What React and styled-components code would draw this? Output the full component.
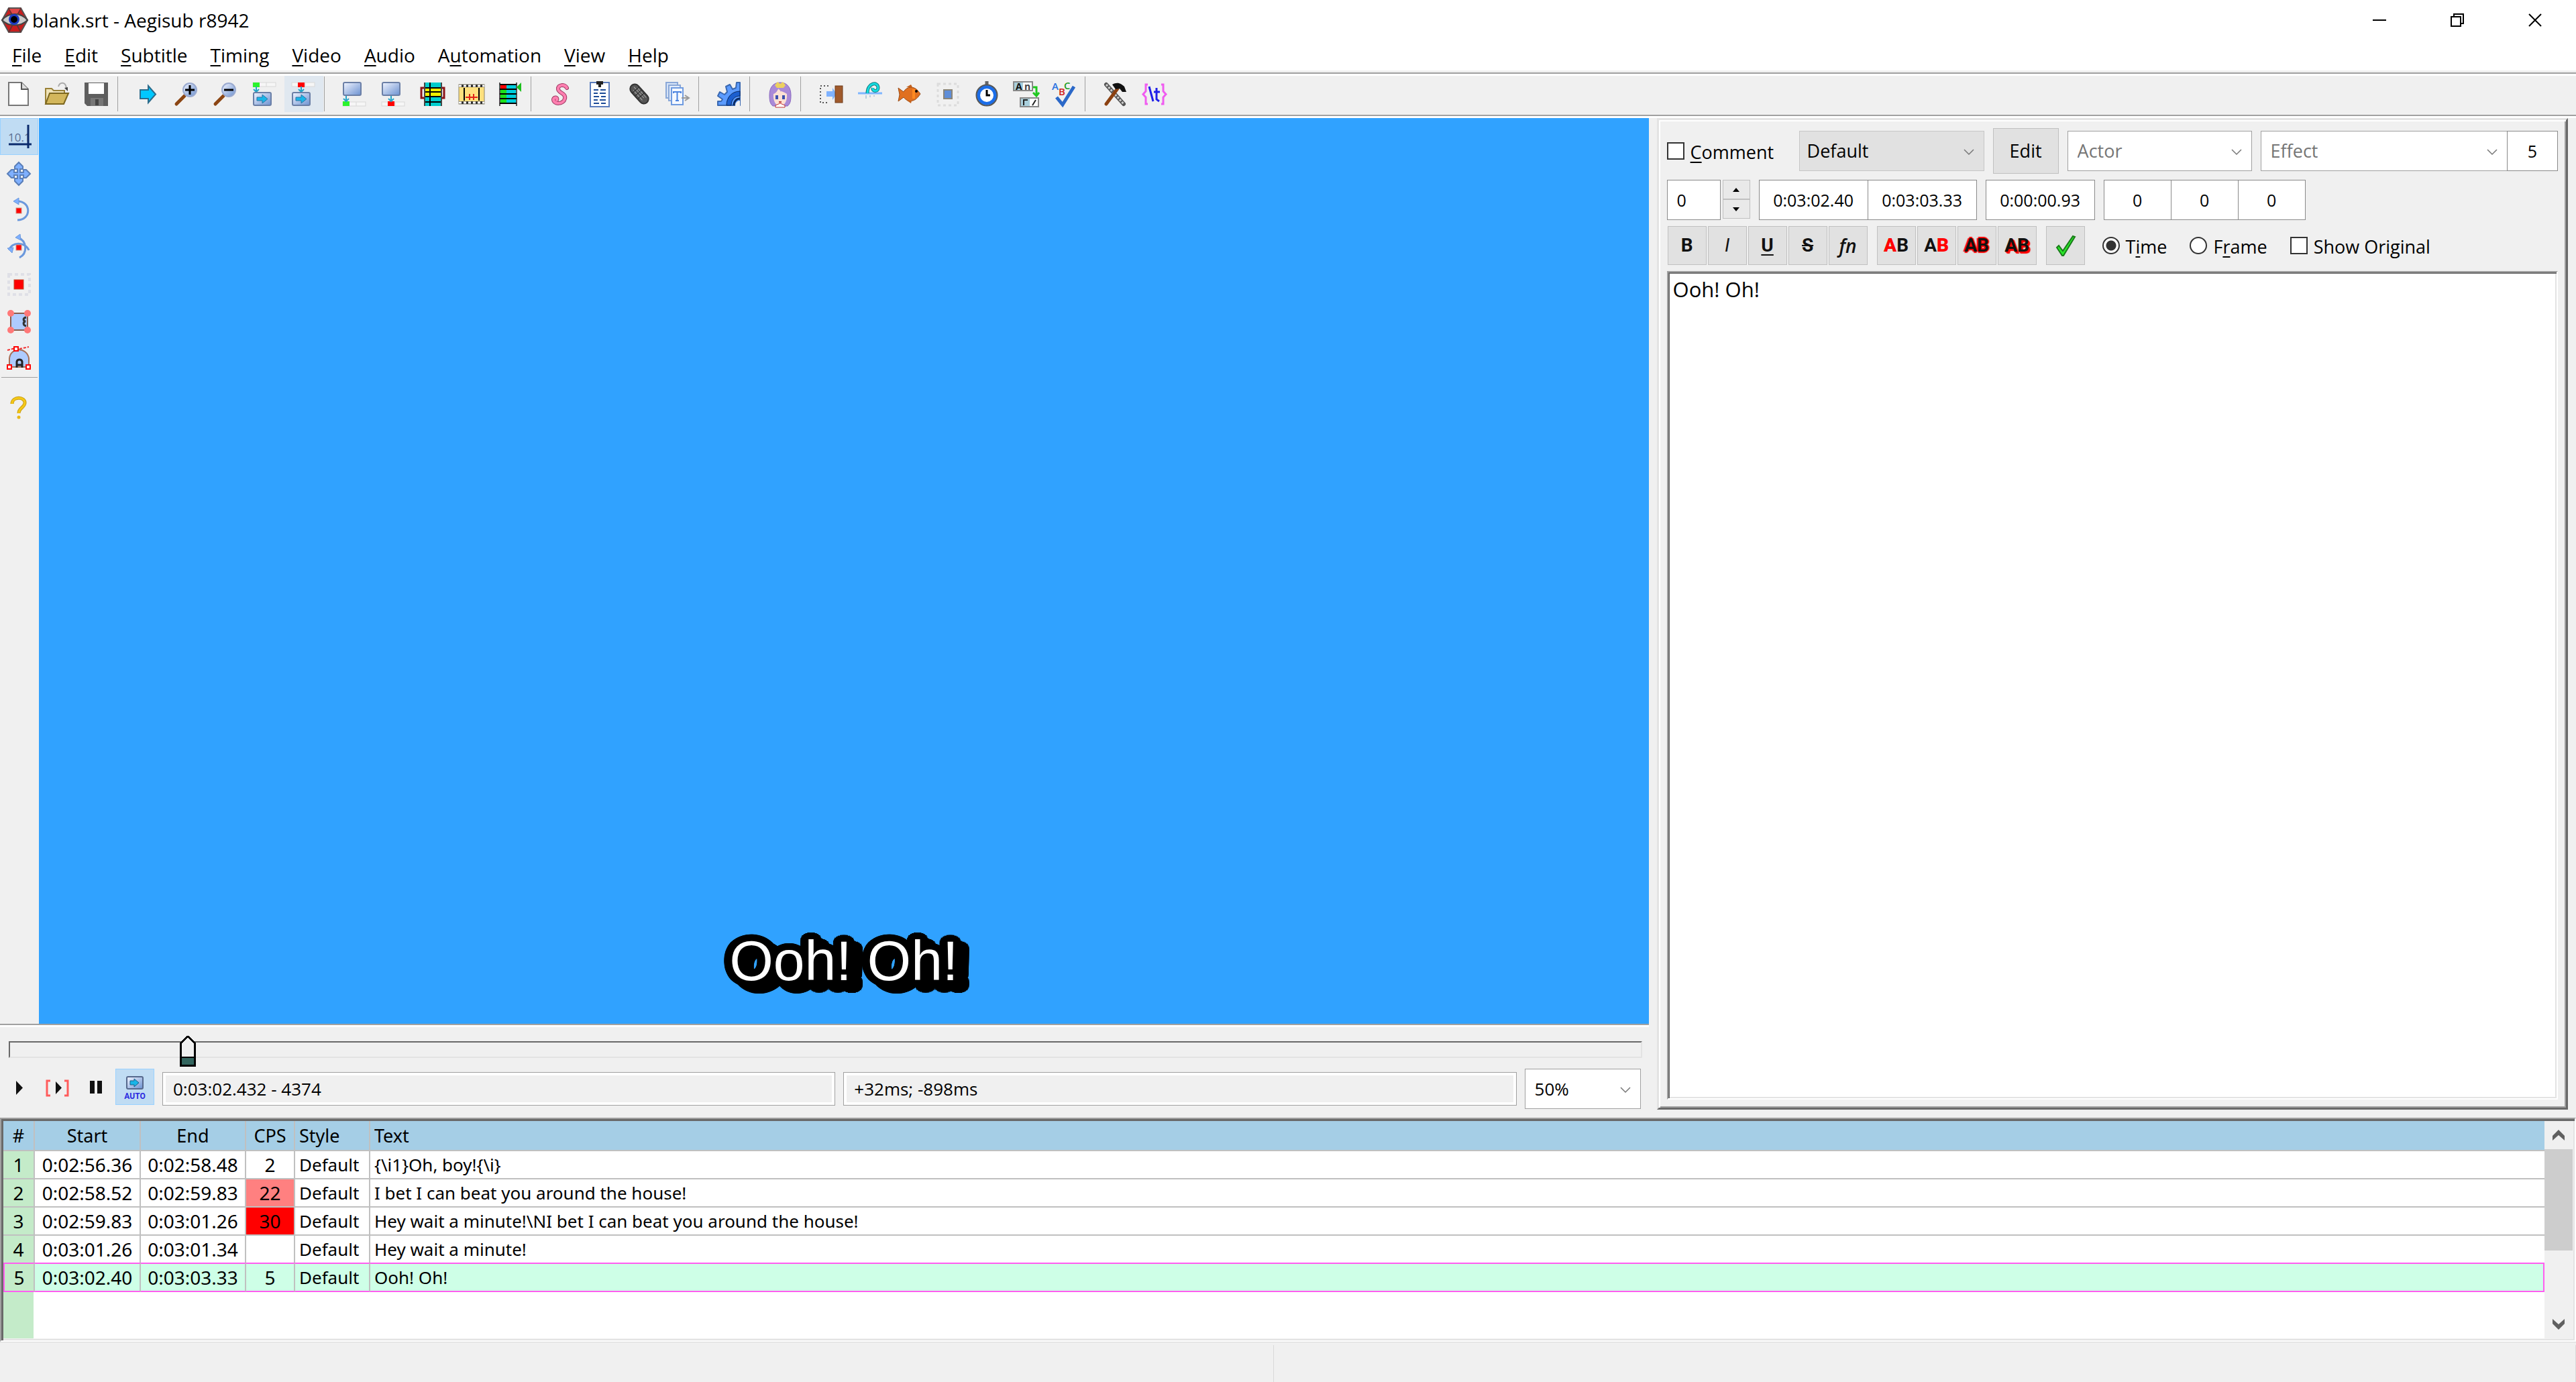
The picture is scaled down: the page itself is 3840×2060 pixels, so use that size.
import { useState } from "react";
import styled, { createGlobalStyle, css } from "styled-components";

const face = "#f0f0f0";
const shadow = "#a0a0a0";
const darkShadow = "#696969";
const light = "#e3e3e3";
const uiFont = `"Open Sans", "Noto Sans", sans-serif`;
const gridFont = `"Noto Sans", "Open Sans", sans-serif`;

const GlobalStyle = createGlobalStyle`
  * {
    box-sizing: border-box;
  }
  body {
    margin: 0;
    background: ${face};
    color: #000;
    font: 27px/36px ${uiFont};
  }
  button, input, select, textarea {
    margin: 0;
    font: inherit;
    color: inherit;
    border-radius: 0;
  }
  u {
    text-decoration-thickness: 2px;
    text-underline-offset: 4px;
  }
`;

const Window = styled.div`
  display: flex;
  flex-direction: column;
  min-height: 100vh;
`;

const TitleBar = styled.header`
  display: flex;
  align-items: center;
  height: 58px;
  padding: 2px 3px 0 2px;
  background: #fff;
`;

const Title = styled.h1`
  flex: 1;
  margin: 0 0 0 6px;
  font-size: 28px;
  font-weight: 400;
`;

const CaptionButton = styled.button`
  display: grid;
  place-items: center;
  width: 116px;
  height: 56px;
  padding: 0;
  border: 0;
  background: none;
`;

const MenuBar = styled.nav`
  display: flex;
  align-items: center;
  gap: 34px;
  height: 47px;
  padding-left: 18px;
  background: #fff;
  font-size: 28px;
`;

const MenuButton = styled.button`
  padding: 0;
  border: 0;
  background: none;
`;

const ToolBar = styled.div`
  display: flex;
  margin-top: 3px;
  padding: 3px 0 4px;
  border-top: 2px solid ${shadow};
  box-shadow: inset 0 3px #fff;
`;

const ToolButton = styled.button`
  display: grid;
  place-items: center;
  flex: none;
  width: ${(p) => (p.$narrow ? 57 : 58)}px;
  height: ${(p) => (p.$narrow ? 55 : 54)}px;
  padding: 0;
  border: 1px solid transparent;
  background: none;
  ${(p) =>
    p.$hot &&
    css`
      background: #e0e8f0;
    `}
  ${(p) =>
    p.$pressed &&
    css`
      background: #c0dcf3;
      border-color: #99d1ff;
    `}
`;

const ToolSeparator = styled.div`
  flex: none;
  width: 18px;
  height: 52px;
  margin-top: 1px;
  background: linear-gradient(90deg, transparent 1px, ${shadow} 1px, ${shadow} 2px, transparent 2px);
`;

const SideSeparator = styled.div`
  height: 19px;
  margin: 0 2px;
  background: linear-gradient(transparent 1px, ${shadow} 1px, ${shadow} 2px, transparent 2px);
`;

const Main = styled.main`
  display: flex;
  flex: 1;
  border-top: 2px solid ${shadow};
  box-shadow: inset 0 3px #fff;
  padding-top: 3px;
`;

const VideoPane = styled.section`
  display: flex;
  flex-direction: column;
  flex: 0 0 64%;
`;

const VideoArea = styled.div`
  display: flex;
  flex: 1;
`;

const SideBar = styled.div`
  display: flex;
  flex-direction: column;
  width: 58px;
`;

const VideoDisplay = styled.div`
  display: flex;
  flex: 1;
  align-items: flex-end;
  justify-content: center;
  padding-bottom: 46px;
  background: #30a2ff;
`;

// Elliptical border plus the same shape once more as a drop shadow
const subtitleOutline = () => {
  const parts = [];
  [0, 1].forEach((step) => {
    [0.5, 1].forEach((ring) => {
      for (let i = 0; i < 32; i++) {
        const a = (i / 32) * Math.PI * 2;
        const x = Math.round(Math.cos(a) * 12 * ring + step * 12);
        const y = Math.round(Math.sin(a) * 10 * ring + step * 9);
        parts.push(`${x}px ${y}px 0 #000`);
      }
    });
  });
  return parts.join(", ");
};

const SubtitleText = styled.p`
  margin: 0;
  color: #fff;
  font: 84px/96px "Liberation Sans", Arial, sans-serif;
  text-shadow: ${subtitleOutline()};
`;

const SeekBar = styled.div`
  padding: 12px 10px 5px 13px;
  border-top: 2px solid ${shadow};
  box-shadow: inset 0 3px #fff;
`;

const SeekSlider = styled.input`
  display: block;
  width: 100%;
  height: 48px;
  appearance: none;
  background: none;

  &::-webkit-slider-runnable-track {
    height: 25px;
    border: 2px solid;
    border-color: ${darkShadow} ${light} ${light} ${darkShadow};
  }

  &::-webkit-slider-thumb {
    appearance: none;
    width: 24px;
    height: 46px;
    margin-top: -10px;
    background:
      linear-gradient(135deg, transparent calc(50% - 1px), #000 calc(50% - 1px), #000 calc(50% + 2px), ${face} calc(50% + 2px)) 0 0 / 12px 12px no-repeat,
      linear-gradient(225deg, transparent calc(50% - 1px), #000 calc(50% - 1px), #000 calc(50% + 2px), ${face} calc(50% + 2px)) 12px 0 / 12px 12px no-repeat,
      linear-gradient(90deg, #000 3px, transparent 3px, transparent 21px, #000 21px) 0 12px / 24px 34px no-repeat,
      linear-gradient(${face} 19px, #000 19px, #000 21px, #33665f 21px, #33665f 31px, #000 31px) 0 12px / 24px 34px no-repeat;
  }
`;

const VideoControls = styled.div`
  display: flex;
  align-items: center;
  padding: 0 12px 13px 0;
  font-size: 26px;
`;

const PlayButtons = styled.div`
  display: flex;
  align-self: flex-start;
  margin-right: 12px;
`;

const ReadOnlyBox = styled.input`
  flex: 1;
  min-width: 0;
  height: 50px;
  margin-right: 12px;
  padding: 0 15px;
  border: 1px solid ${shadow};
  background: ${face};
  box-shadow: inset 0 0 0 4px #fff;
`;

const SelectBox = styled.div`
  display: grid;
  align-items: center;
  flex: ${(p) => (p.$width ? "none" : 1)};
  width: ${(p) => (p.$width ? `${p.$width}px` : "auto")};

  select,
  svg {
    grid-area: 1 / 1;
  }

  select {
    width: 100%;
    height: 60px;
    padding: 0 ${(p) => (p.$button ? 11 : 14)}px;
    appearance: none;
    border: 1px solid ${(p) => (p.$button ? "#c6c6c6" : shadow)};
    background: ${(p) => (p.$button ? "#e1e1e1" : "#fff")};
    color: ${(p) => (p.$hint ? "#767676" : "#000")};
  }

  svg {
    justify-self: end;
    margin: 4px 16px 0 0;
    pointer-events: none;
  }
`;

const EditPanel = styled.section`
  display: flex;
  flex: 1;
  flex-direction: column;
  gap: 9px;
  min-width: 0;
  margin: 0 12px 12px;
  padding: 12px;
  border: 3px solid;
  border-color: ${light} ${darkShadow} ${darkShadow} ${light};
  box-shadow: inset 2px 2px #fff, inset -2px -2px ${shadow};
`;

const EditRow = styled.div`
  display: flex;
  align-items: center;
  gap: 13px;
`;

const FormatRow = styled(EditRow)`
  gap: 14px;
  padding-left: 1px;
`;

const Joined = styled.div`
  display: flex;
  flex: ${(p) => (p.$grow ? 1 : "none")};
  gap: ${(p) => p.$gap || 0}px;

  & > input + input,
  & > div + input {
    margin-left: -1px;
  }
`;

const CheckLabel = styled.label`
  display: flex;
  align-items: center;
  gap: 9px;
  min-width: ${(p) => p.$width || 0}px;

  span {
    padding-top: 4px;
  }

  input {
    width: 26px;
    height: 26px;
    flex: none;
    appearance: none;
    border: 2px solid #333;
    background: #fff;
  }

  input[type="radio"] {
    border-radius: 50%;
  }

  input[type="radio"]:checked {
    background: radial-gradient(circle, #333 7px, #fff 8px);
  }

  input[type="checkbox"]:checked {
    background: radial-gradient(#333 50%, #fff 50%);
  }
`;

const PushButton = styled.button`
  display: grid;
  place-items: center;
  width: 98px;
  height: 68px;
  padding: 0;
  border: 1px solid #c0c0c0;
  background: #e1e1e1;
`;

const Field = styled.input`
  width: ${(p) => p.$width}px;
  height: 60px;
  padding: 0 14px;
  border: 1px solid #8a8a8a;
  background: #fff;
  font-size: 25px;
  text-align: ${(p) => (p.$left ? "left" : "center")};
`;

const TimeField = styled(Field)`
  padding: 0;
`;

const Spinner = styled.div`
  display: flex;
  flex-direction: column;
  width: 41px;
  height: 58px;

  button {
    display: grid;
    place-items: center;
    flex: 1;
    padding: 0;
    border: 1px solid #c0c0c0;
    background: #e9e9e9;
  }
`;

const FormatButton = styled(PushButton)`
  width: 58px;
  height: 58px;
  font: 700 28px/32px Roboto, "Open Sans", sans-serif;
  color: #111;

  i {
    font-weight: 400;
  }
  b {
    color: red;
  }
`;

const FontButton = styled(FormatButton)`
  font: italic 600 28px/32px "Open Sans", sans-serif;
`;

const OutlineGlyphs = styled.span`
  text-shadow: ${(p) =>
    p.$drop
      ? "2px 2px 1px red, 3px 3px 1px red, 1px 1px 0 red"
      : "2px 0 1px red, -2px 0 1px red, 0 2px 1px red, 0 -2px 1px red"};
`;

const Choices = styled.div`
  display: flex;
  gap: 34px;
  margin-left: 12px;
`;

const LineEditor = styled.textarea`
  display: block;
  flex: 1;
  width: 100%;
  padding: 5px 7px;
  resize: none;
  outline: 0;
  border: 2px solid;
  border-color: ${shadow} #fff #fff ${shadow};
  box-shadow: inset 2px 2px ${darkShadow}, inset -2px -2px ${light};
  background: #fff;
  font-size: 31px;
  line-height: 40px;
`;

const GridFrame = styled.section`
  display: flex;
  height: 334px;
  padding: 3px;
  border: 2px solid;
  border-color: ${shadow} #fff #fff ${shadow};
  box-shadow: inset 3px 3px ${darkShadow}, inset -2px -2px ${light};
`;

const GridScroll = styled.div`
  flex: 1;
  overflow: hidden;
  background: linear-gradient(90deg, #c4ebc9 45px, #fff 45px);
`;

const SubsTable = styled.table`
  width: 100%;
  border-collapse: separate;
  border-spacing: 0;
  table-layout: fixed;
  font: 28px/36px ${gridFont};
`;

const Cell = styled.td`
  height: 42px;
  padding: 0 ${(p) => (p.$left ? 6 : 0)}px;
  border-top: 2px solid #c0c0c0;
  border-right: 2px solid #c0c0c0;
  background: ${(p) => p.$fill || "#fff"};
  font-size: ${(p) => (p.$left ? 26 : 28)}px;
  text-align: ${(p) => (p.$left ? "left" : "center")};
  white-space: nowrap;

  &:last-child {
    border-right: 0;
  }
`;

const HeadCell = styled(Cell).attrs({ as: "th", scope: "col" })`
  height: 43px;
  border-top: 0;
  background: #a5cee6;
  font-size: 27px;
  font-weight: 400;
`;

const Row = styled.tr`
  ${(p) =>
    p.$active &&
    css`
      ${Cell} {
        height: 44px;
        border-top-color: #ff5ef0;
        border-bottom: 2px solid #ff5ef0;
      }
      ${Cell}:first-child {
        border-left: 2px solid #ff5ef0;
      }
      ${Cell}:last-child {
        border-right: 2px solid #ff5ef0;
      }
    `}
`;

const ScrollBar = styled.div`
  display: flex;
  flex-direction: column;
  width: 42px;
  background: ${face};

  button {
    display: grid;
    place-items: center;
    height: 42px;
    padding: 0;
    border: 0;
    background: none;
  }
`;

const ScrollTrack = styled.div`
  flex: 1;
`;

const ScrollThumb = styled.div`
  height: 63%;
  background: #cdcdcd;
`;

const StatusBar = styled.footer`
  display: flex;
  height: 60px;
  padding: 4px 0 0;
  border-top: 1px solid #d9d9d9;
`;

const StatusField = styled.div`
  flex: ${(p) => p.$grow} 1 0;
  border-right: 1px solid #d9d9d9;
`;

const Icon = ({ children, width = 36, height = 36, ...rest }) => (
  <svg
    width={width}
    height={height}
    viewBox={`0 0 ${width} ${height}`}
    fill="none"
    overflow="visible"
    aria-hidden="true"
    {...rest}
  >
    {children}
  </svg>
);

const Chevron = () => (
  <Icon width={14} height={8}>
    <path d="M0 0l7 7 7-7" stroke="#777" strokeWidth="1.5" />
  </Icon>
);

const Monitor = ({ y, arrow }) => (
  <g>
    <rect x="1" y={y} width="26" height="19" rx="2" fill="url(#screen)" stroke="#6b7fa6" strokeWidth="2" />
    {arrow && (
      <path d={`M6 ${y + 7}h8v-4l8 6.500-8 6.500v-4H6z`} fill="#19b5e8" stroke="#2c74a0" />
    )}
  </g>
);

const Lens = ({ plus }) => (
  <g>
    <path d="M2 33L14 21" stroke="#8b4513" strokeWidth="5" strokeLinecap="round" />
    <circle cx="22" cy="12" r="10" fill="url(#screen)" stroke="#9aaad0" strokeWidth="2" />
    <path d={plus ? "M15 12h14M22 5v14" : "M15 12h14"} stroke="#000" strokeWidth="3" />
  </g>
);

const JumpIcon = ({ color, x, below }) => (
  <g>
    <rect x="0" y={below ? 30 : 1} width="34" height="6" fill="#f6f6f6" stroke="#d8d8d8" />
    <path d={below ? "M20 30v6" : "M20 1v6"} stroke="#d8d8d8" />
    <rect x={x} y={below ? 29 : 1} width="10" height="7" fill={color} />
    <path
      d={below ? `M${x + 5} 21v7m-4-3l4 4 4-4` : `M${x + 5} 7v7m-4-3l4 4 4-4`}
      stroke="#26a5c8"
      strokeWidth="2"
    />
    <Monitor y={below ? 1 : 16} arrow={!below} />
  </g>
);

const icons = {
  newFile: (
    <g>
      <path d="M2 1h19l10 10v24H2z" fill="#fff" stroke="#777" strokeWidth="2" />
      <path d="M21 1v10h10" fill="#ddd" stroke="#555" strokeWidth="2" />
    </g>
  ),
  open: (
    <g>
      <path d="M-1 32V10h9l3 3h16v7" fill="#efe3b8" stroke="#9a8238" strokeWidth="2" />
      <path d="M-1 33l6-16h28l-7 16z" fill="#d3b75c" stroke="#7c671f" strokeWidth="2" />
      <path d="M18 7c2-7 11-8 12 3" stroke="#aaa" strokeWidth="2" />
      <path d="M27 9l5 5V8z" fill="#444" />
    </g>
  ),
  save: (
    <g>
      <path d="M-1 1h35v35H3l-4-4z" fill="#5e5e5e" />
      <rect x="5" y="2" width="23" height="16" fill="#fff" />
      <rect x="8" y="24" width="19" height="12" fill="#777" />
      <rect x="15" y="26" width="5" height="9" fill="#444" />
    </g>
  ),
  arrow: <path d="M6 12h12V6l11 12.500L18 31v-6H6z" fill="#00c8ff" stroke="#2a6c8c" strokeWidth="2" />,
  zoomIn: <Lens plus />,
  zoomOut: <Lens />,
  jumpStart: <JumpIcon color="#2bf32b" x={0} />,
  jumpEnd: <JumpIcon color="#f00" x={9} />,
  startToVideo: <JumpIcon color="#2bf32b" x={0} below />,
  endToVideo: <JumpIcon color="#f00" x={9} below />,
  snapScene: (
    <g>
      <rect x="1" y="9" width="34" height="15" stroke="#8c1418" strokeWidth="3" />
      <path d="M6 1h25v35H6z" fill="#0cc" />
      <path d="M6 9h25v14H6z" fill="#ee0" />
      <path d="M6 9h25M6 15h25M6 22h25M6 30h25M14 1v35" stroke="#000" strokeWidth="2" />
      <path d="M6 1v35M31 1v35" stroke="#444" strokeWidth="2" />
    </g>
  ),
  film: (
    <g>
      <rect x="-1" y="4" width="38" height="29" fill="#ffe07e" stroke="#8a8468" strokeWidth="1" />
      <path d="M-1 6h38M-1 31h38" stroke="#333" strokeWidth="4" />
      <path d="M-1 6h38M-1 31h38" stroke="#fff" strokeWidth="3" strokeDasharray="4 3" />
      <path d="M7 9v19M29 9v19" stroke="#000" strokeWidth="2" />
      <path d="M9 23h18M15 18v9M21 18v9" stroke="#e02418" strokeWidth="2" />
    </g>
  ),
  shiftToFrame: (
    <g>
      <path d="M2 1v35M27 1v35" stroke="#555" strokeWidth="2" />
      <path d="M3 4h9v8H3z" fill="#f00" />
      <path d="M3 12h9v21H3z" fill="#1ce01c" />
      <path d="M12 4h14v29H12z" fill="#0cd" />
      <path d="M2 4h25M2 11h25M2 18h25M2 25h25M2 32h25" stroke="#000" strokeWidth="2" />
      <path d="M27 8l7-7v14z" fill="#1cc01c" />
    </g>
  ),
  styles: (
    <g strokeLinecap="round">
      <path d="M26 9c-3-6-14-5-13 2 1 6 12 6 10 14-2 9-17 9-17 1 1-4 7-3 5 1" stroke="#9c3a62" strokeWidth="6" />
      <path d="M26 9c-3-6-14-5-13 2 1 6 12 6 10 14-2 9-17 9-17 1 1-4 7-3 5 1" stroke="#ff7fb0" strokeWidth="4" />
    </g>
  ),
  properties: (
    <g>
      <rect x="3" y="1" width="28" height="36" fill="#fff" stroke="#5b7dbd" strokeWidth="2" />
      <path d="M12-1h10v5h-3v4h-4V4h-3z" fill="#222" />
      <path
        d="M8 12h7M18 12h8M8 17h6M17 17h9M8 22h8M19 22h7M8 27h6M17 27h9M8 32h8M19 32h7"
        stroke="#1b4a96"
        strokeWidth="2"
      />
    </g>
  ),
  attachments: (
    <g transform="rotate(-42 18 18)">
      <rect x="11" y="1" width="14" height="34" rx="7" fill="#555" stroke="#333" strokeWidth="2" />
      <path d="M15 8v20M19 5v22M22 9v20" stroke="#aaa" strokeWidth="1" />
      <path d="M12 10h12M12 16h12M12 22h12" stroke="#222" />
    </g>
  ),
  fonts: (
    <g>
      <rect x="0" y="1" width="17" height="23" fill="#d6e3f6" stroke="#8aa8d8" strokeWidth="2" />
      <rect x="4" y="5" width="17" height="23" fill="#e4edfa" stroke="#8aa8d8" strokeWidth="2" />
      <rect x="8" y="9" width="17" height="25" fill="#f4f8ff" stroke="#6f9be0" strokeWidth="2" />
      <path d="M11 17v-2h11v2M16.500 15v13M14 28h5" stroke="#4c84e0" strokeWidth="2" />
      <path d="M23 24h11M28 20l6 4-6 4" stroke="#999" strokeWidth="2" />
    </g>
  ),
  automation: (
    <g strokeLinejoin="round">
      <path
        d="M34 1h-5l-1 8-5 2-4-7-6 3 2 8-4 4-7-4-3 6 7 5-2 3H1v6h33z"
        fill="#5b9bff"
        stroke="#3a68b0"
        strokeWidth="2"
      />
      <path d="M34 14c-12 0-20 9-20 21h7c0-8 5-14 13-14z" fill="#1b5fd0" stroke="#0b2a60" />
      <path d="M34 25c-5 0-9 4-9 10" stroke="#0b2a60" strokeWidth="3" />
      <path d="M34 28v8h-7c0-5 3-8 7-8z" fill={face} />
    </g>
  ),
  assDraw: (
    <g>
      <path d="M18 1C7 1 2 9 2 20c0 8 1 13 5 16h22c4-3 5-8 5-16C34 9 29 1 18 1z" fill="#a98ad8" stroke="#8a68c0" />
      <path d="M8 18c4-1 6-5 7-8 3 4 9 5 13 8 1 11-4 18-10 18S7 29 8 18z" fill="#fbe0d4" />
      <path d="M14 5l-2 10 4-6 3 6 3-6 4 6-3-10z" fill="#a98ad8" />
      <path d="M10 5l4-5 4 3 4-3 4 5-3 4H13z" fill="#ecd060" />
      <path d="M11 20h4v6h-4zM21 20h4v6h-4z" fill="#3a4fae" />
      <path d="M11 35l7-3 7 3v3H11z" fill="#fff" stroke="#c03030" />
      <path d="M16 30h4" stroke="#c04040" strokeWidth="2" />
    </g>
  ),
  shiftTimes: (
    <g>
      <path d="M14 6H2v25h12" stroke="#555" strokeWidth="2" strokeDasharray="2 3" />
      <path d="M11 14h9V9l6 9-6 9v-5h-9z" fill="#7fb2ff" />
      <rect x="24" y="6" width="11" height="25" fill="#a05a2c" stroke="#6f3d1c" />
    </g>
  ),
  timingPost: (
    <g>
      <path d="M0 17h36" stroke="#7fb6ff" strokeWidth="3" />
      <path d="M14 17c0-16 16-18 16-8 0 6-9 6-8 0" stroke="#137a80" strokeWidth="5" />
      <path d="M14 17c0-16 16-18 16-8 0 6-9 6-8 0" stroke="#14dce0" strokeWidth="3" />
      <path d="M12 20v5M18 20v3M24 20v2" stroke="#bcd" strokeWidth="2" />
    </g>
  ),
  fish: (
    <g>
      <path d="M2 9l8 6c5-9 16-9 22-1l3 4-3 4c-6 8-16 9-22 1l-8 6 2-10z" fill="#e07020" stroke="#9a4c18" />
      <path d="M14 8l7-4 2 4zM15 28l6 4 1-4z" fill="#c2601c" />
      <path d="M25 11v14" stroke="#ff8a20" strokeWidth="4" />
      <circle cx="29" cy="14" r="2" fill="#000" />
    </g>
  ),
  resample: (
    <g>
      <rect x="3" y="3" width="30" height="32" stroke="#dcdcdc" strokeWidth="3" strokeDasharray="4 4" />
      <rect x="12" y="12" width="12" height="13" fill="#5f8ed8" stroke="#8a8578" strokeWidth="2" />
    </g>
  ),
  clock: (
    <g>
      <path d="M18-1v6" stroke="#666" strokeWidth="5" />
      <circle cx="18" cy="20" r="12.500" fill="#fff" stroke="#1b6de8" strokeWidth="5" />
      <circle cx="18" cy="20" r="15.500" stroke="#565656" strokeWidth="2" />
      <path d="M18 12v8h5" stroke="#000" strokeWidth="3" />
    </g>
  ),
  translate: (
    <g fontFamily="Open Sans" fontSize="14" fontWeight="700">
      <rect x="0" y="0" width="28" height="13" fill="#fff" stroke="#888" strokeWidth="2" />
      <rect x="1" y="1" width="13" height="11" fill="#a8cfdc" />
      <text x="3" y="12" fill="#111">A</text>
      <text x="16" y="12" fill="#444">n</text>
      <rect x="10" y="24" width="27" height="13" fill="#fff" stroke="#888" strokeWidth="2" />
      <rect x="11" y="25" width="13" height="11" fill="#a8cfdc" />
      <path d="M15 35v-8h6M28 35l5-8" stroke="#222" strokeWidth="2" />
      <path d="M29 8h5v12m-5-4l5 5 4-5" stroke="#1fc81f" strokeWidth="3" />
    </g>
  ),
  spellcheck: (
    <g>
      <g fontFamily="Open Sans" fontSize="15" fontWeight="600">
        <text x="-1" y="12" fill="#2a72e0">A</text>
        <text x="9" y="20" fill="#d02020">B</text>
        <text x="17" y="11" fill="#1c9c1c">C</text>
      </g>
      <path d="M6 23l9 11L32 7" stroke="#2b68c8" strokeWidth="5" />
    </g>
  ),
  options: (
    <g>
      <path d="M4 4l26 29" stroke="#555" strokeWidth="6" strokeLinecap="round" />
      <path d="M4 4l26 29" stroke="#ccc" strokeWidth="3" strokeDasharray="3 2" />
      <path d="M4 33L21 10" stroke="#8b4010" strokeWidth="5" strokeLinecap="round" />
      <path d="M13 4c8-5 14-1 18 3l3 8h-6l-4-5-6 1z" fill="#111" />
    </g>
  ),
  cycleTags: (
    <g strokeWidth="3">
      <path d="M8 4H5v10l-4 4.500 4 4.500v10h3M28 4h3v10l4 4.500-4 4.500v10h-3" stroke="#f05cf0" />
      <path d="M10 7l6 22M21 9v17l4 3M17 15h9" stroke="#2020e8" />
    </g>
  ),
  standard: (
    <g>
      <text x="1" y="25" fill="#5c6f95" fontFamily="Open Sans" fontSize="17">
        10.1
      </text>
      <path d="M2 29h34M31 0v35" stroke="#0b2a6c" strokeWidth="3" />
    </g>
  ),
  drag: (
    <path
      d="M17 1l6 6v4h-4v5h5v-4h4l6 6-6 6h-4v-4h-5v5h4v4l-6 6-6-6v-4h4v-5h-5v4H6l-6-6 6-6h4v4h5v-5h-4V7z"
      fill="#7fb0ff"
      stroke="#5b7fb8"
      strokeWidth="2"
    />
  ),
  rotateZ: (
    <g>
      <path d="M15 4c21 0 21 28 0 28" stroke="#6b98dc" strokeWidth="3" />
      <path d="M9 4l8-5v10z" fill="#7fb0ff" stroke="#6b98dc" />
      <rect x="13" y="14" width="8" height="8" fill="#f00" stroke="#d09080" />
    </g>
  ),
  rotateXY: (
    <g>
      <path d="M16 3c14 6 14 24 2 30M3 22c2-13 24-13 29 0" stroke="#6b98dc" strokeWidth="3" />
      <path d="M12 3l7-5 1 9zM0 19l9-1-2 8z" fill="#7fb0ff" stroke="#6b98dc" />
      <rect x="13" y="14" width="8" height="8" fill="#f00" stroke="#d09080" />
    </g>
  ),
  scale: (
    <g>
      <rect x="2" y="3" width="31" height="30" stroke="#dfe0e6" strokeWidth="4" strokeDasharray="5 4" />
      <rect x="10" y="11" width="14" height="14" fill="#f00" stroke="#c05030" />
    </g>
  ),
  clip: (
    <g>
      <rect x="5" y="6" width="25" height="25" fill="#aecbff" stroke="#8a5c4c" strokeWidth="2" />
      <circle cx="5" cy="6" r="5" fill="#ff7878" />
      <circle cx="30" cy="6" r="5" fill="#ff7878" />
      <circle cx="5" cy="31" r="5" fill="#ff7878" />
      <circle cx="30" cy="31" r="5" fill="#ff7878" />
      <path d="M28 12c-5 1-5 5-1 6-4 1-4 6 1 7" stroke="#333" strokeWidth="3" />
    </g>
  ),
  vectorClip: (
    <g>
      <path d="M3 31V18C5 1 29 1 32 18v13z" fill="#aecbff" stroke="#a87058" strokeWidth="2" />
      <path d="M0 6l12-3M18 4l14-3" stroke="#f03030" strokeWidth="2" strokeDasharray="4 2" />
      <path d="M14 32v-9c1-4 7-4 8 0v9M14 28h8" stroke="#222" strokeWidth="3" />
      <path d="M10 1h6v6h-6zM0 28h6v6H0zM28 28h6v6h-6z" fill="#fff" stroke="#f00" strokeWidth="2" />
    </g>
  ),
  help: (
    <g>
      <path d="M7 12c0-12 20-11 19-1-1 7-9 7-9 15" stroke="#c89c10" strokeWidth="5" />
      <path d="M7 12c0-12 20-11 19-1-1 7-9 7-9 15" stroke="#f4c818" strokeWidth="3" />
      <circle cx="17" cy="32" r="2.500" fill="#e8b818" />
    </g>
  ),
  play: <path d="M13 8l10 10.500L13 29z" fill="#111" />,
  playLine: (
    <g>
      <path d="M15 9l9 9.500L15 28z" fill="#111" />
      <path d="M7 8H2v22h5M28 8h5v22h-5" stroke="#ff5c5c" strokeWidth="3" />
    </g>
  ),
  pause: <path d="M9 9h7v19H9zM20 9h7v19h-7z" fill="#111" />,
  auto: (
    <g>
      <rect x="6" y="3" width="24" height="18" rx="2" fill="url(#screen)" stroke="#56688c" strokeWidth="2" />
      <path d="M11 9h6V6l7 6-7 6v-3h-6z" fill="#19b5e8" stroke="#1c5f88" />
      <text x="18" y="36" fill="#2b2be0" fontFamily="Roboto" fontSize="12" fontWeight="700" textAnchor="middle">
        AUTO
      </text>
    </g>
  ),
};

const toolGroups = [
  ["newFile", "open", "save"],
  ["arrow", "zoomIn", "zoomOut", "jumpStart", "jumpEnd"],
  ["startToVideo", "endToVideo", "snapScene", "film", "shiftToFrame"],
  ["styles", "properties", "attachments", "fonts"],
  ["automation"],
  ["assDraw"],
  ["shiftTimes", "timingPost", "fish", "resample", "clock", "translate", "spellcheck"],
  ["options", "cycleTags"],
];

const visualTools = ["standard", "drag", "rotateZ", "rotateXY", "scale", "clip", "vectorClip"];

const menus = ["File", "Edit", "Subtitle", "Timing", "Video", "Audio", "Automation", "View", "Help"];

const lines = [
  { start: "0:02:56.36", end: "0:02:58.48", cps: "2", text: "{\\i1}Oh, boy!{\\i}" },
  { start: "0:02:58.52", end: "0:02:59.83", cps: "22", cpsFill: "#ff8080", text: "I bet I can beat you around the house!" },
  {
    start: "0:02:59.83",
    end: "0:03:01.26",
    cps: "30",
    cpsFill: "#ff0000",
    text: "Hey wait a minute!\\NI bet I can beat you around the house!",
  },
  { start: "0:03:01.26", end: "0:03:01.34", cps: "", text: "Hey wait a minute!" },
  { start: "0:03:02.40", end: "0:03:03.33", cps: "5", text: "Ooh! Oh!", active: true },
];

const Tool = ({ name, ...rest }) => (
  <ToolButton type="button" aria-label={name} {...rest}>
    <Icon>{icons[name]}</Icon>
  </ToolButton>
);

const AppIcon = () => (
  <Icon width={40} height={38}>
    <path d="M11 1h18l10 18-10 18H11L1 19z" fill="#c81e1e" stroke="#555" strokeWidth="2" />
    <path d="M11 1l9 17 9-17M11 37l9-17 9 17" stroke="#6b3030" strokeWidth="2" />
    <path d="M12 2l8 14 8-14z" fill="#e04848" />
    <path d="M1 19c10-12 28-12 38 0-10 10-28 10-38 0z" fill="#ccc" stroke="#444" strokeWidth="2" />
    <circle cx="19" cy="18" r="8" fill="#1a3ac0" />
    <circle cx="19" cy="18" r="5" fill="#000" />
  </Icon>
);

const CaptionButtons = () => (
  <>
    <CaptionButton type="button" aria-label="Minimize">
      <Icon width={20} height={20}>
        <path d="M0 10h20" stroke="#000" strokeWidth="2" />
      </Icon>
    </CaptionButton>
    <CaptionButton type="button" aria-label="Restore">
      <Icon width={20} height={20}>
        <path d="M1 5h14v14H1zM5 5V1h14v14h-4" stroke="#000" strokeWidth="2" />
      </Icon>
    </CaptionButton>
    <CaptionButton type="button" aria-label="Close">
      <Icon width={20} height={20}>
        <path d="M1 1l18 18M19 1L1 19" stroke="#000" strokeWidth="2" />
      </Icon>
    </CaptionButton>
  </>
);

const DropDown = ({ label, value, ...rest }) => (
  <SelectBox {...rest}>
    <select aria-label={label} defaultValue={value}>
      <option>{value}</option>
    </select>
    <Chevron />
  </SelectBox>
);

const VideoBox = () => (
  <VideoPane>
    <VideoArea>
      <SideBar>
        {visualTools.map((name) => (
          <Tool key={name} name={name} $narrow $pressed={name === "standard"} />
        ))}
        <SideSeparator />
        <Tool name="help" $narrow />
      </SideBar>
      <VideoDisplay>
        <SubtitleText>Ooh! Oh!</SubtitleText>
      </VideoDisplay>
    </VideoArea>
    <SeekBar>
      <SeekSlider type="range" aria-label="Seek" min="0" max="41600" defaultValue="4374" />
    </SeekBar>
    <VideoControls>
      <PlayButtons>
        <Tool name="play" $narrow />
        <Tool name="playLine" $narrow />
        <Tool name="pause" />
        <Tool name="auto" $pressed />
      </PlayButtons>
      <ReadOnlyBox readOnly aria-label="Position" value="0:03:02.432 - 4374" />
      <ReadOnlyBox readOnly aria-label="Offset" value="+32ms; -898ms" />
      <DropDown label="Zoom" value="50%" $width={173} />
    </VideoControls>
  </VideoPane>
);

const EditBox = () => {
  const [text, setText] = useState("Ooh! Oh!");

  return (
    <EditPanel>
      <EditRow>
        <Joined>
          <CheckLabel $width={197}>
            <input type="checkbox" />
            <span>
              <u>C</u>omment
            </span>
          </CheckLabel>
          <DropDown label="Style" value="Default" $width={276} $button />
        </Joined>
        <PushButton type="button">Edit</PushButton>
        <DropDown label="Actor" value="Actor" $width={275} $hint />
        <Joined $grow>
          <DropDown label="Effect" value="Effect" $hint />
          <Field aria-label="Characters per second" defaultValue="5" $width={76} />
        </Joined>
      </EditRow>
      <EditRow>
        <Joined $gap={3}>
          <Field aria-label="Layer" defaultValue="0" $width={80} $left />
          <Spinner>
            <button type="button" aria-label="Layer up">
              <Icon width={12} height={6}>
                <path d="M1 6l5-6 5 6z" fill="#000" />
              </Icon>
            </button>
            <button type="button" aria-label="Layer down">
              <Icon width={12} height={6}>
                <path d="M1 0l5 6 5-6z" fill="#000" />
              </Icon>
            </button>
          </Spinner>
        </Joined>
        <Joined>
          <TimeField aria-label="Start time" defaultValue="0:03:02.40" $width={163} />
          <TimeField aria-label="End time" defaultValue="0:03:03.33" $width={163} />
        </Joined>
        <TimeField aria-label="Duration" defaultValue="0:00:00.93" $width={163} />
        <Joined>
          <Field aria-label="Left margin" defaultValue="0" $width={101} />
          <Field aria-label="Right margin" defaultValue="0" $width={101} />
          <Field aria-label="Vertical margin" defaultValue="0" $width={101} />
        </Joined>
      </EditRow>
      <FormatRow>
        <Joined $gap={2}>
          <FormatButton type="button">B</FormatButton>
          <FormatButton type="button">
            <i>I</i>
          </FormatButton>
          <FormatButton type="button">
            <u>U</u>
          </FormatButton>
          <FormatButton type="button">
            <s>S</s>
          </FormatButton>
          <FontButton type="button">fn</FontButton>
        </Joined>
        <Joined $gap={2}>
          <FormatButton type="button">
            <span>
              <b>A</b>B
            </span>
          </FormatButton>
          <FormatButton type="button">
            <span>
              A<b>B</b>
            </span>
          </FormatButton>
          <FormatButton type="button">
            <OutlineGlyphs>AB</OutlineGlyphs>
          </FormatButton>
          <FormatButton type="button">
            <OutlineGlyphs $drop>AB</OutlineGlyphs>
          </FormatButton>
        </Joined>
        <FormatButton type="button" aria-label="Commit">
          <Icon>
            <path d="M5 21l3-3 6 8L29 4l3 1-17 28h-2z" fill="#2ae82a" stroke="#1a7a1a" strokeWidth="2" />
          </Icon>
        </FormatButton>
        <Choices>
          <CheckLabel>
            <input type="radio" name="unit" defaultChecked />
            <span>
              T<u>i</u>me
            </span>
          </CheckLabel>
          <CheckLabel>
            <input type="radio" name="unit" />
            <span>
              F<u>r</u>ame
            </span>
          </CheckLabel>
          <CheckLabel>
            <input type="checkbox" />
            <span>Show Original</span>
          </CheckLabel>
        </Choices>
      </FormatRow>
      <LineEditor aria-label="Line text" spellCheck={false} value={text} onChange={(e) => setText(e.target.value)} />
    </EditPanel>
  );
};

const SubtitlesGrid = () => (
  <GridFrame>
    <GridScroll>
      <SubsTable>
        <colgroup>
          <col width="47" />
          <col width="158" />
          <col width="157" />
          <col width="73" />
          <col width="112" />
          <col />
        </colgroup>
        <thead>
          <tr>
            <HeadCell>#</HeadCell>
            <HeadCell>Start</HeadCell>
            <HeadCell>End</HeadCell>
            <HeadCell>CPS</HeadCell>
            <HeadCell $left>Style</HeadCell>
            <HeadCell $left>Text</HeadCell>
          </tr>
        </thead>
        <tbody>
          {lines.map((line, index) => {
            const fill = line.active ? "#ceffe7" : "#fff";
            return (
              <Row key={line.start} $active={line.active}>
                <Cell $fill="#c4ebc9">{index + 1}</Cell>
                <Cell $fill={fill}>{line.start}</Cell>
                <Cell $fill={fill}>{line.end}</Cell>
                <Cell $fill={line.cpsFill || fill}>{line.cps}</Cell>
                <Cell $fill={fill} $left>
                  Default
                </Cell>
                <Cell $fill={fill} $left>
                  {line.text}
                </Cell>
              </Row>
            );
          })}
        </tbody>
      </SubsTable>
    </GridScroll>
    <ScrollBar>
      <button type="button" aria-label="Scroll up">
        <Icon width={18} height={16}>
          <path d="M0 9l9-9 9 9v7L9 8l-9 8z" fill="#606060" />
        </Icon>
      </button>
      <ScrollTrack>
        <ScrollThumb />
      </ScrollTrack>
      <button type="button" aria-label="Scroll down">
        <Icon width={18} height={16}>
          <path d="M0 7l9 9 9-9V0L9 8 0 0z" fill="#606060" />
        </Icon>
      </button>
    </ScrollBar>
  </GridFrame>
);

const App = () => (
  <>
    <GlobalStyle />
    <svg width="0" height="0" style={{ position: "absolute" }} aria-hidden="true">
      <defs>
        <linearGradient id="screen" x1="0" y1="0" x2="1" y2="1">
          <stop offset="0" stopColor="#f2f5ff" />
          <stop offset="1" stopColor="#6a90d0" />
        </linearGradient>
      </defs>
    </svg>
    <Window>
      <TitleBar>
        <AppIcon />
        <Title>blank.srt - Aegisub r8942</Title>
        <CaptionButtons />
      </TitleBar>
      <MenuBar>
        {menus.map((menu) => (
          <MenuButton key={menu} type="button">
            {menu === "Automation" ? (
              <>
                A<u>u</u>tomation
              </>
            ) : (
              <>
                <u>{menu[0]}</u>
                {menu.slice(1)}
              </>
            )}
          </MenuButton>
        ))}
      </MenuBar>
      <ToolBar>
        {toolGroups.flatMap((group, index) => [
          index > 0 && <ToolSeparator key={`separator-${index}`} />,
          ...group.map((name) => <Tool key={name} name={name} $hot={name === "jumpEnd"} />),
        ])}
      </ToolBar>
      <Main>
        <VideoBox />
        <EditBox />
      </Main>
      <SubtitlesGrid />
      <StatusBar>
        <StatusField $grow={1898} />
        <StatusField $grow={1940} />
      </StatusBar>
    </Window>
  </>
);

App.displayName = "App";

export default App;
